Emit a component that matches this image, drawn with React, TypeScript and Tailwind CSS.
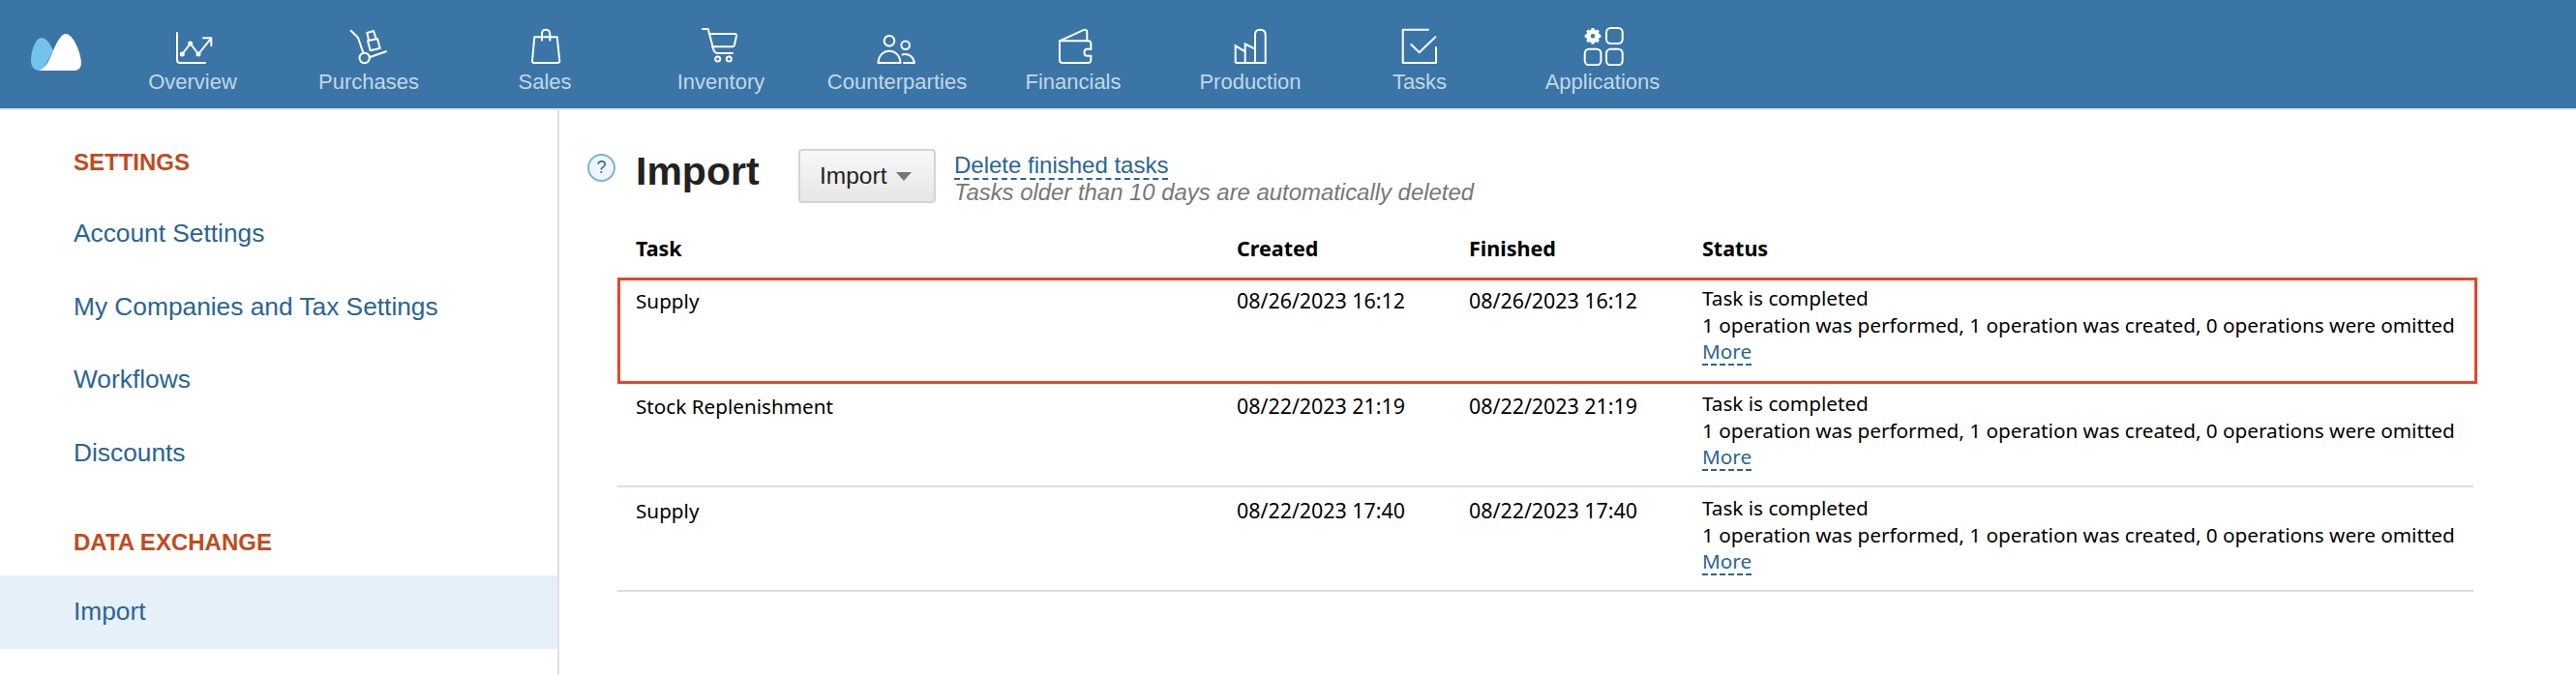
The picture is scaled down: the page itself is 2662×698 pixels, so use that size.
const navItems = [
  { label: "Overview", width: "w-[182px]", icon: <OverviewIcon /> },
  { label: "Purchases", width: "w-[182px]", icon: <PurchasesIcon /> },
  { label: "Sales", width: "w-[182px]", icon: <SalesIcon /> },
  { label: "Inventory", width: "w-[182px]", icon: <InventoryIcon /> },
  { label: "Counterparties", width: "w-[182px]", icon: <CounterpartiesIcon /> },
  { label: "Financials", width: "w-[182px]", icon: <FinancialsIcon /> },
  { label: "Production", width: "w-[184px]", icon: <ProductionIcon /> },
  { label: "Tasks", width: "w-[166px]", icon: <TasksIcon /> },
  { label: "Applications", width: "w-[212px]", icon: <ApplicationsIcon /> },
];

const tasks = [
  { name: "Supply", created: "08/26/2023 16:12", finished: "08/26/2023 16:12" },
  { name: "Stock Replenishment", created: "08/22/2023 21:19", finished: "08/22/2023 21:19" },
  { name: "Supply", created: "08/22/2023 17:40", finished: "08/22/2023 17:40" },
];

function NavSvg({ children }: { children: React.ReactNode }) {
  return (
    <svg
      viewBox="0 0 48 40"
      className="h-[40px] w-[48px]"
      fill="none"
      stroke="white"
      strokeWidth="2"
      strokeLinecap="round"
      strokeLinejoin="round"
    >
      {children}
    </svg>
  );
}

function OverviewIcon() {
  return (
    <NavSvg>
      <path d="M8 6V34Q8 37 11 37H37" />
      <path d="M13.3 28L21.7 17L30 28L43.3 11.3M35 11.3H43.3V19.3" />
      <circle cx="13.3" cy="28" r="1.5" fill="white" />
      <circle cx="21.7" cy="17" r="1.5" fill="white" />
      <circle cx="30" cy="28" r="1.5" fill="white" />
    </NavSvg>
  );
}

function PurchasesIcon() {
  return (
    <NavSvg>
      <path d="M5.7 3.7L13 11L18.5 26.8" />
      <circle cx="19.7" cy="32" r="5.2" />
      <path d="M24.7 31.3L42 25.3" />
      <path d="M23 14.3L33 12L35.7 22L25.7 24.3Z" />
      <path d="M24.2 14L22.3 6L29 4L31.7 12" />
    </NavSvg>
  );
}

function SalesIcon() {
  return (
    <NavSvg>
      <path d="M13.3 10.3H36.7L39.3 35Q39.3 37 37 37H13Q11 37 11 35Z" />
      <path d="M21 13.7V7Q21 2.7 25 2.7T29.3 7V13.7" />
    </NavSvg>
  );
}

function InventoryIcon() {
  return (
    <NavSvg>
      <path d="M5 2H10.7L16 22Q17 27 21 27H36" />
      <path d="M12.7 7H38.5Q40.3 7 40 9L38 18.5Q37.5 20.3 35.5 20.3H15" />
      <circle cx="20.7" cy="33" r="2.5" />
      <circle cx="32.3" cy="33" r="2.5" />
    </NavSvg>
  );
}

function CounterpartiesIcon() {
  return (
    <NavSvg>
      <circle cx="16" cy="14.3" r="5.3" />
      <circle cx="32.7" cy="18.7" r="4.3" />
      <path d="M4.5 37C5 29 10 24.7 16 24.7S27 29 27.5 37Z" />
      <path d="M29.5 28.5C36 26.5 41 31 42 37H31" />
    </NavSvg>
  );
}

function FinancialsIcon() {
  return (
    <NavSvg>
      <path d="M42.3 22.7V17Q42.3 14.3 39.5 14.3H10V34Q10 37 13 37H39.5Q42.3 37 42.3 34V29.7" />
      <path d="M10 14.3L35 2.9Q38.3 2 38.3 5V14.3" />
      <path d="M42.3 22.7H38.5Q35.5 22.7 35.5 26.2T38.5 29.7H42.3" />
    </NavSvg>
  );
}

function ProductionIcon() {
  return (
    <NavSvg>
      <path
        d="M8.7 37H39.7V8Q39.7 2.7 34.3 2.7T29 8V37M29 22.7L18.7 17.5V37M18.7 25.3L8.7 19.3V37"
        strokeLinejoin="miter"
        strokeLinecap="butt"
      />
    </NavSvg>
  );
}

function TasksIcon() {
  return (
    <NavSvg>
      <path d="M33.7 2.7H6.7V37H41V20.3" strokeLinecap="butt" />
      <path d="M15.3 18L23.7 26.3L40.3 10.3" />
    </NavSvg>
  );
}

function ApplicationsIcon() {
  return (
    <NavSvg>
      <rect x="28" y="1" width="16.7" height="16" rx="4.5" />
      <rect x="5.7" y="22.7" width="16.7" height="16.6" rx="4.5" />
      <rect x="28" y="22.7" width="16.7" height="16.6" rx="4.5" />
      <circle cx="14" cy="9.3" r="4.6" strokeWidth="4.6" />
      <path
        d="M14 1V3.5M14 15V17.6M5.7 9.3H8.2M19.8 9.3H22.3M8.2 3.5L9.9 5.2M18.1 13.4L19.8 15.1M8.2 15.1L9.9 13.4M18.1 5.2L19.8 3.5"
        strokeWidth="3.2"
        strokeLinecap="butt"
      />
    </NavSvg>
  );
}

function Logo() {
  return (
    <svg viewBox="0 0 52 38" className="mt-[35px] ml-[32px] h-[38px] w-[52px] shrink-0">
      <path d="M0 27C0 17 5 4 11 4C15 4 19 9 23 17L12 38H9C3 38 0 34 0 27Z" fill="#74c2ee" />
      <path d="M8 38C16 36 19 26 24 15C28 6 32 0 36 0C44 0 52 21 52 30C52 35 49 38 45 38Z" fill="white" />
    </svg>
  );
}

function SectionTitle({ className, children }: { className: string; children: string }) {
  return <div className={`pl-[76px] text-[24px] leading-[28px] font-bold text-[#c24a20] ${className}`}>{children}</div>;
}

function SideLink({ active, children }: { active?: boolean; children: string }) {
  return (
    <div className={`flex h-[75.5px] items-center pl-[76px] text-[26.3px] text-[#2a6496] ${active ? "bg-[#e6f0f9]" : ""}`}>
      {children}
    </div>
  );
}

export default function App() {
  return (
    <div className="h-[698px] w-[2662px] overflow-hidden bg-white font-['Liberation_Sans',sans-serif]">
      <header className="flex h-[114px] items-start border-b-2 border-[#e6e6e6] bg-[#3a75a6]">
        <Logo />
        <nav className="ml-[24px] flex">
          {navItems.map(item => (
            <div key={item.label} className={`flex flex-col items-center pt-[28px] ${item.width}`}>
              {item.icon}
              <span className="text-[22px] leading-[34px] text-[#c3d7e9]">{item.label}</span>
            </div>
          ))}
        </nav>
      </header>

      <div className="flex h-[584px]">
        <aside className="w-[578px] shrink-0 border-r-2 border-[#dfdfdf]">
          <SectionTitle className="mt-[40px] mb-[22px]">SETTINGS</SectionTitle>
          <SideLink>Account Settings</SideLink>
          <SideLink>My Companies and Tax Settings</SideLink>
          <SideLink>Workflows</SideLink>
          <SideLink>Discounts</SideLink>
          <SectionTitle className="mt-[41px] mb-[20px]">DATA EXCHANGE</SectionTitle>
          <SideLink active>Import</SideLink>
        </aside>

        <main className="flex-1 pt-[36px]">
          <div className="flex h-[60px] items-start pl-[29px]">
            <div className="mt-[9px] flex h-[29px] w-[29px] items-center justify-center rounded-full border-2 border-[#7fb2d9] bg-[#eef6fc] text-[18px] text-[#2a6496]">
              ?
            </div>
            <h1 className="mt-[3px] ml-[21px] w-[128px] text-[41px] leading-[48px] font-bold text-[#222]">Import</h1>
            <button className="mt-[4px] ml-[40px] flex h-[56px] w-[142px] items-center gap-[10px] rounded-[4px] border-2 border-[#d4d4d4] bg-gradient-to-b from-[#f8f8f8] to-[#e6e6e6] pl-[20px] text-[24.5px] text-[#222]">
              Import
              <span className="h-0 w-0 border-x-[8px] border-t-[9px] border-x-transparent border-t-[#777]" />
            </button>
            <div className="mt-[6px] ml-[19px] text-[24px]">
              <div className="h-[30px] w-fit border-b-2 border-dashed border-[#2a6496] leading-[30px] text-[#2a6496]">
                Delete finished tasks
              </div>
              <div className="text-[23.9px] leading-[26px] text-[#777] italic">Tasks older than 10 days are automatically deleted</div>
            </div>
          </div>

          <div className="relative mt-[16px] ml-[60px] w-[1918px]">
            <table className="w-full table-fixed border-collapse font-['Noto_Sans',sans-serif] text-[20.7px] leading-[28px] text-black">
              <thead>
                <tr className="h-[61px] text-left text-[21.5px]">
                  <th className="w-[640px] pl-[19px] align-middle font-bold">Task</th>
                  <th className="w-[240px] align-middle font-bold">Created</th>
                  <th className="w-[241px] align-middle font-bold">Finished</th>
                  <th className="align-middle font-bold">Status</th>
                </tr>
              </thead>
              <tbody>
                {tasks.map((task, i) => (
                  <tr key={i} className="h-[108px] border-b-2 border-[#dcdcdc]">
                    <td className="pt-[10px] pl-[19px] align-top">{task.name}</td>
                    <td className="pt-[10px] align-top text-[21.4px]">{task.created}</td>
                    <td className="pt-[10px] align-top text-[21.4px]">{task.finished}</td>
                    <td className="pt-[7px] align-top">
                      <div>Task is completed</div>
                      <div>1 operation was performed, 1 operation was created, 0 operations were omitted</div>
                      <div className="h-[28px] w-fit border-b-2 border-dashed border-[#2a6496] leading-[26px] text-[#2a6496]">More</div>
                    </td>
                  </tr>
                ))}
              </tbody>
            </table>
            <div className="absolute top-[61px] left-0 h-[110px] w-[1922px] border-[3px] border-[#e8452f]" />
          </div>
        </main>
      </div>
    </div>
  );
}
